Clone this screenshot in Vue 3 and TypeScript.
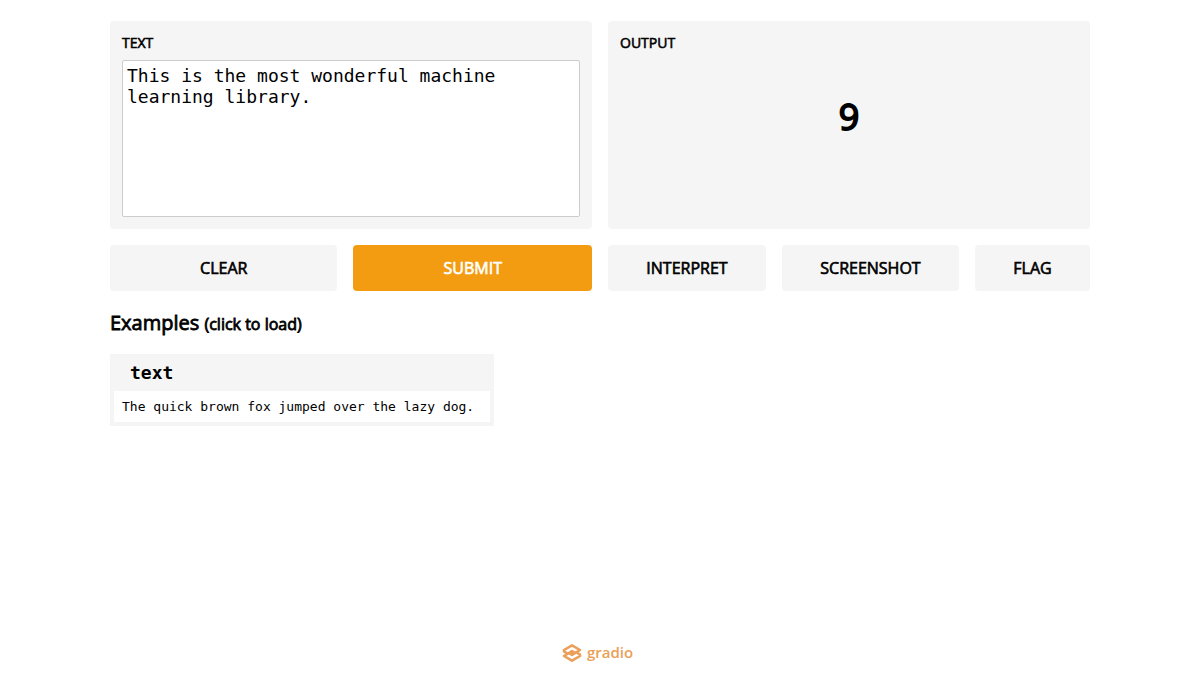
<script setup lang="ts">
import { ref } from 'vue'

const text = ref('This is the most wonderful machine learning library.')
const output = ref('9')
const examples: string[] = ['The quick brown fox jumped over the lazy dog.']

function clearAll(): void {
  text.value = ''
  output.value = ''
}

function submit(): void {
  output.value = String(text.value.split(/\s+/).filter(Boolean).length)
}

function load(example: string): void {
  text.value = example
}
</script>

<template>
  <div class="page">
    <main class="container">
      <div class="panels">
        <div class="column">
          <section class="panel">
            <label class="title" for="input-text">TEXT</label>
            <textarea id="input-text" v-model="text" class="input" spellcheck="false"></textarea>
          </section>
          <div class="buttons">
            <button type="button" class="button" @click="clearAll">CLEAR</button>
            <button type="button" class="button submit" @click="submit">SUBMIT</button>
          </div>
        </div>
        <div class="column">
          <section class="panel">
            <div class="title">OUTPUT</div>
            <output class="result" for="input-text">{{ output }}</output>
          </section>
          <div class="buttons">
            <button type="button" class="button">INTERPRET</button>
            <button type="button" class="button">SCREENSHOT</button>
            <button type="button" class="button">FLAG</button>
          </div>
        </div>
      </div>
      <h2 class="heading">Examples <small>(click to load)</small></h2>
      <table class="examples">
        <thead>
          <tr><th scope="col">text</th></tr>
        </thead>
        <tbody>
          <tr v-for="example in examples" :key="example" @click="load(example)">
            <td>{{ example }}</td>
          </tr>
        </tbody>
      </table>
    </main>
    <footer class="footer">
      <a class="brand" href="#">
        <svg class="mark" viewBox="0 0 20 20" aria-hidden="true">
          <g fill="none" stroke="currentColor" stroke-width="2.6" stroke-linejoin="round">
            <path d="M6 11 L2 8.4 V7 L10 2.3 L18 7 L10 11.9 L6.8 9.9" />
            <path d="M14 9 L18 11.6 V13 L10 17.7 L2 13 L10 8.1 L13.2 10.1" />
          </g>
        </svg>
        <span>gradio</span>
      </a>
    </footer>
  </div>
</template>

<style>
body {
  margin: 0;
  background: #fff;
}
</style>

<style scoped>
.page {
  display: flex;
  flex-direction: column;
  min-height: 100vh;
  box-sizing: border-box;
  padding: 21px 16px;
  font-family: "Open Sans", sans-serif;
  font-size: 16px;
  color: #000;
}
.container {
  width: 100%;
  max-width: 980px;
  margin: 0 auto;
  flex: 1;
}
.panels {
  display: grid;
  grid-template-columns: 1fr 1fr;
  gap: 16px;
}
.column {
  display: flex;
  flex-direction: column;
  gap: 16px;
  min-width: 0;
}
.panel {
  display: flex;
  flex-direction: column;
  flex: 1;
  box-sizing: border-box;
  padding: 12px;
  border-radius: 4px;
  background: #f5f5f5;
}
.title {
  font-size: 14px;
  line-height: 20px;
  margin-bottom: 7px;
  -webkit-text-stroke: 0.04em currentColor;
}
.input {
  display: block;
  width: 100%;
  height: 157px;
  box-sizing: border-box;
  margin: 0;
  padding: 4px;
  border: 1px solid #ccc;
  border-radius: 2px;
  background: #fff;
  color: #000;
  font-family: "DejaVu Sans Mono", monospace;
  font-size: 18px;
  line-height: 21px;
  resize: none;
  outline: none;
}
.result {
  display: block;
  padding-top: 31px;
  text-align: center;
  font-size: 36px;
  line-height: 52px;
  -webkit-text-stroke: 0.05em currentColor;
}
.buttons {
  display: flex;
  gap: 16px;
}
.button {
  flex: 1 1 auto;
  margin: 0;
  padding: 12px;
  border: 0;
  border-radius: 4px;
  background: #f5f5f5;
  color: #000;
  font-family: inherit;
  font-size: 16px;
  line-height: 22px;
  -webkit-text-stroke: 0.04em currentColor;
  cursor: pointer;
}
.submit {
  background: #f39c12;
  color: #fff;
}
.heading {
  margin: 18px 0 16px;
  font-size: 20px;
  line-height: 28px;
  font-weight: 400;
  -webkit-text-stroke: 0.04em currentColor;
}
.heading small {
  font-size: 16px;
}
.examples {
  min-width: 384px;
  border: 4px solid #f5f5f5;
  border-spacing: 0;
  font-family: "DejaVu Sans Mono", monospace;
  font-size: 13px;
  line-height: 15px;
}
.examples th {
  padding: 4px 16px 8px;
  background: #f5f5f5;
  text-align: left;
  font-size: 18px;
  line-height: 21px;
}
.examples td {
  padding: 8px;
  cursor: pointer;
}
.footer {
  display: flex;
  justify-content: center;
}
.brand {
  display: flex;
  align-items: center;
  gap: 5px;
  padding-right: 5px;
  color: #eb9f58;
  font-size: 15px;
  line-height: 20px;
  font-weight: 600;
  text-decoration: none;
}
.brand span {
  padding-bottom: 2px;
  line-height: 18px;
}
.mark {
  width: 20px;
  height: 20px;
}
</style>
